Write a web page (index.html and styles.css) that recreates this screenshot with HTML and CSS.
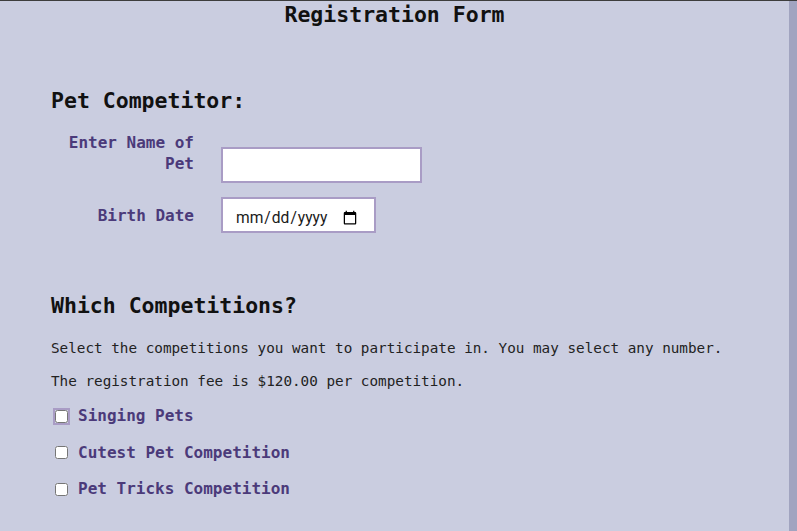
FILE: index.html
```html
<!DOCTYPE html>
<html lang="en">
<head>
<meta charset="utf-8">
<title>Registration Form</title>
<link rel="stylesheet" href="styles.css">
</head>
<body>
<div class="page">
  <main class="content">
    <h1 class="title">Registration Form</h1>
    <form class="form">
      <section class="section section-pet">
        <h2 class="section-title">Pet Competitor:</h2>
        <div class="field-row">
          <label class="field-label" for="petName">Enter Name of Pet</label>
          <input class="text-input" id="petName" type="text">
        </div>
        <div class="field-row field-row-center">
          <label class="field-label" for="birth">Birth Date</label>
          <input class="date-input" id="birth" type="date">
        </div>
      </section>
      <section class="section section-comp">
        <h2 class="section-title">Which Competitions?</h2>
        <p class="note">Select the competitions you want to participate in. You may select any number.</p>
        <p class="note">The registration fee is $120.00 per competition.</p>
        <div class="check-list">
          <label class="check-row"><input class="check check-hover" type="checkbox"><span>Singing Pets</span></label>
          <label class="check-row"><input class="check" type="checkbox"><span>Cutest Pet Competition</span></label>
          <label class="check-row"><input class="check" type="checkbox"><span>Pet Tricks Competition</span></label>
        </div>
      </section>
    </form>
  </main>
  <div class="scroll-strip"></div>
</div>
</body>
</html>
```
FILE: styles.css
```css
html, body {
  margin: 0;
  padding: 0;
  height: 100%;
  overflow: hidden;
}
body {
  background: #cacde0;
  font-family: "DejaVu Sans Mono", "Liberation Mono", monospace;
  color: #1c1c1c;
}
.page {
  display: flex;
  height: 100%;
  border-top: 1px solid #3d3d3d;
  box-sizing: border-box;
}
.content {
  flex: 1;
  padding: 0 0 0 51px;
}
.scroll-strip {
  width: 8px;
  background: #a1a4c0;
}
.title {
  margin: 0 0 0 -51px;
  padding-top: 1px;
  font-size: 21.5px;
  line-height: 25px;
  font-weight: bold;
  text-align: center;
  color: #111;
}
.section-title {
  margin: 0;
  font-size: 21.5px;
  line-height: 25px;
  font-weight: bold;
  color: #111;
}
.section-pet {
  margin-top: 61px;
}
.section-pet .section-title {
  margin-bottom: 19px;
}
.field-row {
  display: flex;
  align-items: last baseline;
  gap: 27px;
  margin-bottom: 14px;
}
.field-row-center {
  align-items: center;
}
.field-label {
  width: 143px;
  text-align: right;
  font-size: 16px;
  line-height: 21px;
  font-weight: bold;
  color: #4b3a7a;
}
.text-input,
.date-input {
  box-sizing: border-box;
  height: 36px;
  border: 2px solid #a99cc5;
  background: #fff;
  outline: none;
  margin: 0;
}
.text-input {
  width: 201px;
  padding: 0 8px 2px;
  font-size: 16px;
}
.date-input {
  width: 155px;
  padding: 6px 14px 0 12px;
  font-family: Roboto, "Liberation Sans", Arial, sans-serif;
  font-size: 15.6px;
  color: #1a1a1a;
}
.section-comp {
  margin-top: 60px;
}
.section-comp .section-title {
  margin-bottom: 21px;
}
.note {
  margin: 0 0 15px;
  font-size: 14.3px;
  line-height: 18px;
  color: #222;
}
.check-list {
  display: flex;
  flex-direction: column;
  gap: 14.5px;
  margin-top: 12px;
}
.check-row {
  display: flex;
  align-items: center;
  gap: 7px;
  font-size: 16px;
  line-height: 22px;
  font-weight: bold;
  color: #4b3a7a;
}
.check {
  width: 13px;
  height: 13px;
  margin: 0 3px 0 4px;
}
.check-hover {
  outline: 2px solid #a99cc5;
  outline-offset: 0;
}
```
